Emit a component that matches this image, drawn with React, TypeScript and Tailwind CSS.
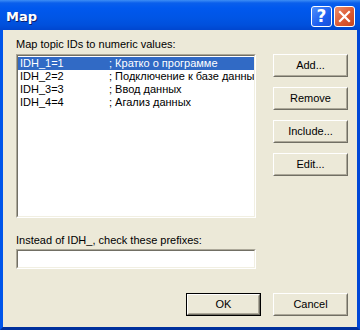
import React from 'react'

const rows = [
  { id: 'IDH_1=1', text: '; Кратко о программе', selected: true },
  { id: 'IDH_2=2', text: '; Подключение к базе данных' },
  { id: 'IDH_3=3', text: '; Ввод данных' },
  { id: 'IDH_4=4', text: '; Агализ данных' },
]

function Sunken({ className, children }: { className?: string; children?: React.ReactNode }) {
  return (
    <div className={`border border-t-[#aca899] border-l-[#aca899] border-r-white border-b-white ${className ?? ''}`}>
      <div className="h-full border border-t-[#716f64] border-l-[#716f64] border-r-[#f1efe2] border-b-[#f1efe2] bg-white overflow-hidden">
        {children}
      </div>
    </div>
  )
}

function Btn({ label, isDefault }: { label: string; isDefault?: boolean }) {
  const inner = (
    <div className="h-full flex items-center justify-center border border-t-white border-l-white border-r-[#716f64] border-b-[#716f64] bg-[#ece9d8]">
      <div className="w-full h-full flex items-center justify-center border border-transparent border-r-[#aca899] border-b-[#aca899]">
        {label}
      </div>
    </div>
  )
  if (isDefault) {
    return <div className="w-[75px] h-[23px] border border-black">{inner}</div>
  }
  return <div className="w-[75px] h-[23px]">{inner}</div>
}

function HelpIcon() {
  return (
    <div className="w-[21px] h-[21px] rounded-[3px] border border-white bg-[linear-gradient(135deg,#4f8ffb,#1c5ef0_60%,#1a4fd8)] flex items-center justify-center text-white font-bold text-[17px] leading-none font-['DejaVu_Sans',sans-serif]">
      ?
    </div>
  )
}

function CloseIcon() {
  return (
    <div className="w-[21px] h-[21px] rounded-[3px] border border-white bg-[linear-gradient(135deg,#ea8d6c,#dd5a33_55%,#c64520)] flex items-center justify-center">
      <svg width="13" height="13" viewBox="0 0 13 13">
        <path d="M2 2 L11 11 M11 2 L2 11" stroke="white" strokeWidth="2.2" strokeLinecap="square" />
      </svg>
    </div>
  )
}

export default function App() {
  return (
    <div className="w-[360px] h-[330px] flex flex-col text-[11px] leading-[13px] text-black font-['Liberation_Sans',sans-serif] select-none">
      {/* title bar */}
      <div className="h-[30px] shrink-0 flex items-center pl-[6px] pr-[5px] bg-[linear-gradient(180deg,#3d8df5_0px,#0a5fec_3px,#0058ee_8px,#0055e5_18px,#0050dc_25px,#0046cf_30px)]">
        <div className="flex-1 text-white font-bold text-[13px] font-['DejaVu_Sans',sans-serif] [text-shadow:1px_1px_0_#0a1e6e] pt-[2px]">
          Map
        </div>
        <div className="flex gap-[2px] mt-[2px]">
          <HelpIcon />
          <CloseIcon />
        </div>
      </div>

      {/* body */}
      <div className="flex-1 flex flex-col bg-[#ece9d8] border-l-[3px] border-r-[3px] border-b-[3px] border-l-[#0055ea] border-r-[#0047d6] border-b-[#00309c] pl-[13px] pr-[9px]">
        <div className="flex">
          <div className="w-[240px] flex flex-col">
            <div className="mt-[8px] mb-[3px]">Map topic IDs to numeric values:</div>
            <Sunken className="h-[164px]">
              <div className="pt-[1px] pl-[0px]">
                {rows.map((r) => (
                  <div
                    key={r.id}
                    className={`flex h-[13px] whitespace-nowrap ${r.selected ? 'bg-[#316ac5] text-white' : ''}`}
                  >
                    <span className="w-[91px] pl-[2px] shrink-0">{r.id}</span>
                    <span>{r.text}</span>
                  </div>
                ))}
              </div>
            </Sunken>
            <div className="mt-[16px] mb-[2px]">Instead of IDH_, check these prefixes:</div>
            <Sunken className="h-[20px]" />
          </div>
          <div className="ml-[17px] pt-[24px] flex flex-col gap-[10px]">
            <Btn label="Add..." />
            <Btn label="Remove" />
            <Btn label="Include..." />
            <Btn label="Edit..." />
          </div>
        </div>
        <div className="mt-[24px] flex justify-end gap-[12px]">
          <Btn label="OK" isDefault />
          <Btn label="Cancel" />
        </div>
      </div>
    </div>
  )
}
